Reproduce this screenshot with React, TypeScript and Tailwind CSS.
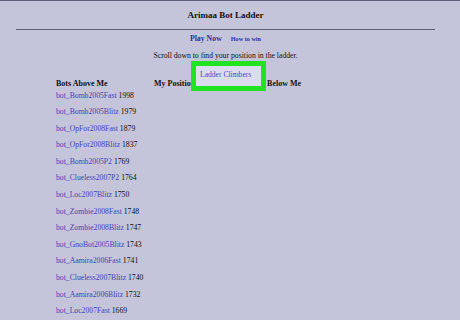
import React from 'react';

const bots: [string, number][] = [
  ['bot_Bomb2005Fast', 1998],
  ['bot_Bomb2005Blitz', 1979],
  ['bot_OpFor2008Fast', 1879],
  ['bot_OpFor2008Blitz', 1837],
  ['bot_Bomb2005P2', 1769],
  ['bot_Clueless2007P2', 1764],
  ['bot_Loc2007Blitz', 1750],
  ['bot_Zombie2008Fast', 1748],
  ['bot_Zombie2008Blitz', 1747],
  ['bot_GnoBot2005Blitz', 1743],
  ['bot_Aamira2006Fast', 1741],
  ['bot_Clueless2007Blitz', 1740],
  ['bot_Aamira2006Blitz', 1732],
  ['bot_Loc2007Fast', 1669],
];

export default function App() {
  return (
    <div
      className="relative w-[460px] h-[320px] overflow-hidden bg-[#c4c5da] border-t border-[#5c5f7a] text-[#111]"
      style={{ fontFamily: '"Liberation Serif", "Times New Roman", serif' }}
    >
      <div className="w-[451px]">
        {/* Header */}
        <h1 className="text-center text-[9px] font-bold pt-[9px] leading-[10px]">Arimaa Bot Ladder</h1>
        <hr className="ml-[16px] mt-[9px] border-0 h-[1px] bg-[#5e6078] w-[419px]" />

        <div className="flex justify-center items-baseline gap-[9px] mt-[4px] leading-[10px]">
          <a className="text-[7.8px] font-bold text-[#2e2ea0]">Play Now</a>
          <a className="text-[6.2px] font-bold text-[#2e2ea0]">How to win</a>
        </div>

        <p className="text-center text-[7.7px] mt-[7px] leading-[10px]">
          Scroll down to find your position in the ladder.
        </p>

        {/* Columns */}
        <div className="flex pl-[56px] mt-[18px] whitespace-nowrap">
          <div className="w-[98px]">
            <div className="text-[8px] font-bold leading-[10px]">Bots Above Me</div>
            <ul className="flex flex-col gap-[6.6px] mt-[1.5px]">
              {bots.map(([name, score]) => (
                <li key={name} className="text-[7.7px] leading-[10px]">
                  <a className="text-[#4343b8]">{name}</a> {score}
                </li>
              ))}
            </ul>
          </div>
          <div className="w-[96px] text-[8px] font-bold leading-[10px]">My Position</div>
          <div className="text-[8px] font-bold leading-[10px]">Bots Below Me</div>
        </div>
      </div>

      {/* Highlight annotation */}
      <div className="absolute left-[191px] top-[60px] w-[75px] h-[30px] border-[5px] border-[#22e322] bg-[#dcdcef] pl-[4px] pt-[4px] whitespace-nowrap">
        <span className="block text-[7.6px] leading-[10px] text-[#4a4ac8]">Ladder Climbers</span>
      </div>
    </div>
  );
}
